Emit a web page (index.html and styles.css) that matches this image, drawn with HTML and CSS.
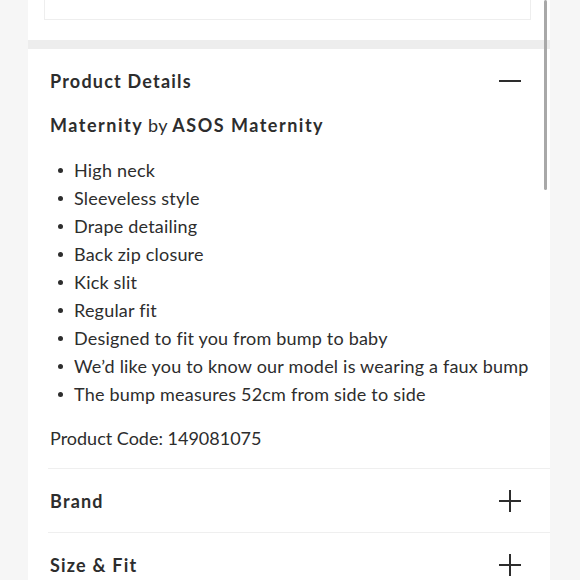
FILE: index.html
```html
<!DOCTYPE html>
<html>
<head>
<meta charset="utf-8">
<link rel="stylesheet" href="styles.css">
</head>
<body>
<div class="page">
  <div class="panel">
    <div class="top-card"></div>
    <div class="band"></div>
    <section class="details">
      <div class="acc-head">
        <h2>Product Details</h2>
        <span class="minus"></span>
      </div>
      <p class="brandline"><b>Maternity</b> by <b>ASOS Maternity</b></p>
      <ul class="bullets">
        <li>High neck</li>
        <li>Sleeveless style</li>
        <li>Drape detailing</li>
        <li>Back zip closure</li>
        <li>Kick slit</li>
        <li>Regular fit</li>
        <li>Designed to fit you from bump to baby</li>
        <li>We’d like you to know our model is wearing a faux bump</li>
        <li>The bump measures 52cm from side to side</li>
      </ul>
      <p class="code">Product Code: 149081075</p>
    </section>
    <div class="row">
      <h2>Brand</h2>
      <span class="plus"></span>
    </div>
    <div class="row">
      <h2>Size &amp; Fit</h2>
      <span class="plus"></span>
    </div>
  </div>
  <div class="scrollbar"></div>
</div>
</body>
</html>
```

FILE: styles.css
```css
html, body {
  margin: 0;
  padding: 0;
  background: #f6f6f6;
  font-family: "Lato", "Noto Sans", sans-serif;
  color: #2d2d2d;
}
.page {
  position: relative;
  width: 580px;
  height: 580px;
  overflow: hidden;
}
.panel {
  margin-left: 28px;
  width: 522px;
  background: #fff;
  min-height: 580px;
}
.top-card {
  margin: 0 19px 0 16px;
  height: 19px;
  border: 1px solid #eeeeee;
  border-top: 0;
}
.band {
  margin-top: 20px;
  height: 9px;
  background: #ededed;
}
.details {
  padding: 20px 0 16px 22px;
}
.acc-head {
  display: flex;
  justify-content: space-between;
  align-items: center;
  padding-right: 29px;
  height: 24px;
}
h2 {
  margin: 0;
  font-size: 18px;
  font-weight: 700;
  letter-spacing: 1.2px;
  line-height: 24px;
}
.minus {
  width: 22px;
  height: 2px;
  background: #2d2d2d;
}
.brandline {
  margin: 20px 0 0;
  font-size: 18px;
  line-height: 24px;
  letter-spacing: 0.3px;
}
.brandline b {
  font-weight: 700;
  letter-spacing: 1.5px;
}
.bullets {
  list-style: none;
  margin: 19px 0 0;
  padding: 0;
}
.bullets li {
  display: flex;
  align-items: center;
  font-size: 18px;
  line-height: 28px;
  letter-spacing: 0.2px;
}
.bullets li::before {
  content: "";
  width: 5px;
  height: 5px;
  border-radius: 50%;
  background: #2d2d2d;
  margin: 0 11px 0 8px;
  flex: none;
}
.code {
  margin: 16px 0 0;
  font-size: 18px;
  line-height: 28px;
  letter-spacing: 0;
}
.row {
  margin-left: 20px;
  border-top: 1px solid #efefef;
  height: 63px;
  display: flex;
  align-items: center;
  justify-content: space-between;
  padding: 0 29px 0 2px;
}
.plus {
  position: relative;
  width: 22px;
  height: 22px;
}
.plus::before, .plus::after {
  content: "";
  position: absolute;
  background: #2d2d2d;
}
.plus::before { left: 0; top: 10px; width: 22px; height: 2px; }
.plus::after { left: 10px; top: 0; width: 2px; height: 22px; }
.scrollbar {
  position: absolute;
  left: 544px;
  top: 0;
  width: 3px;
  height: 190px;
  background: #a8a8a8;
  border-radius: 2px;
}
```
